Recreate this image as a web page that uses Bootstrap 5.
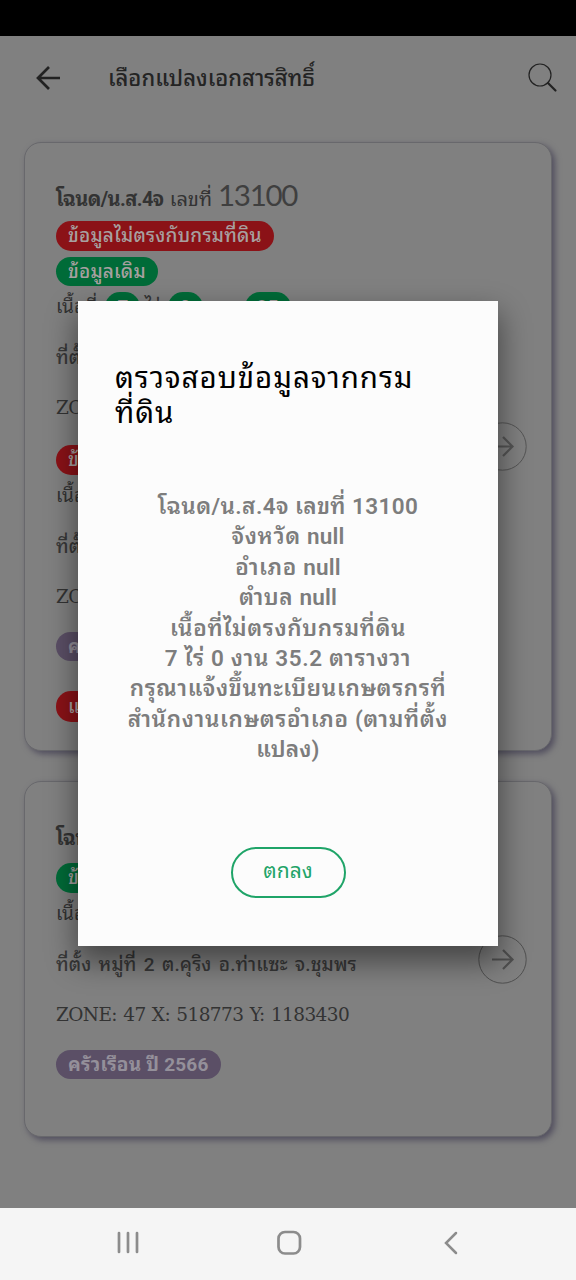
<!DOCTYPE html>
<html lang="th">
<head>
<meta charset="utf-8">
<meta name="viewport" content="width=device-width, initial-scale=1">
<title>เลือกแปลงเอกสารสิทธิ์</title>
<link href="https://cdn.jsdelivr.net/npm/bootstrap@5.3.0/dist/css/bootstrap.min.css" rel="stylesheet">
<style>
body{background:#808080;font-family:Roboto,"Noto Sans Thai Looped","Noto Looped Thai",Loma,Garuda,Waree,Umpush,"Noto Sans Thai",sans-serif;color:#3b3b3b}
.screen{width:576px;height:1280px}
.statusbar{height:36px;background:#000}
.appbar{height:84px;padding:0 18px 0 34px;color:#222}
.apptitle{font-size:22px;font-weight:500;margin-left:46px;padding-top:1px;line-height:40px;color:#242424;letter-spacing:0}
.plot{margin:0 24px;padding:37px 31px 0;border:1px solid #68686c;border-radius:17px;background:#808080;box-shadow:3px 3px 6px #514e5e;color:#333}
.plot-a{height:609px;margin-top:22px}
.plot-b{height:356px;margin-top:30px}
.line-title{height:36px;font-size:20px;padding-top:1px}
.line-title b{letter-spacing:-.6px}
.line-s{height:40px;font-size:19px;padding-top:2px}
.line-m{height:62px;font-size:19px;font-weight:500;letter-spacing:.1px;word-spacing:2.5px;padding-top:2px;color:#383838}
.deed{font-family:Lato,sans-serif;font-size:29.5px;letter-spacing:-1.3px;color:#3f3f3f;margin:0 0 6px 6px}
.zone{height:40px;font-family:"DejaVu Serif",serif;font-size:18.5px;letter-spacing:-.6px;word-spacing:1px}
.tag{display:flex;width:max-content;align-items:center;height:30px;padding:1px 12px 0;border-radius:15px;font-size:19px;font-weight:500;letter-spacing:.2px;color:#a7a0a0;white-space:nowrap}
.tag-red{background:#8b1217}.tag-green{background:#006b38}.tag-plum{background:#5b4f66;color:#94909a;font-weight:700}
.go{right:24px;width:49px;height:49px}
.dialog-box{left:78px;top:301px;width:420px;height:644.5px;background:#fcfcfc;box-shadow:0 14px 28px 2px rgba(0,0,0,.46);padding:60px 36px 0}
.dialog-box h1{font-size:29.5px;line-height:35px;font-weight:400;color:#000;margin:0 0 0 1px;white-space:nowrap;letter-spacing:.95px}
.msg{margin-top:60px;font-size:22.5px;line-height:30.4px;font-weight:600;color:#7d7d7d;text-align:center;letter-spacing:.65px}
.msg .latin{letter-spacing:.15px}
.msg .num{letter-spacing:.4px}
.msg div{white-space:nowrap}
.btn-ok{width:115px;height:51px;border:2.5px solid #1fa468;border-radius:26px;color:#1fa468;font-size:21px;padding:0}
.navkeys{height:72px;background:#f5f5f5}
</style>
</head>
<body>
<div class="screen position-relative overflow-hidden d-flex flex-column">
  <div class="statusbar flex-shrink-0"></div>
  <header class="appbar d-flex align-items-center flex-shrink-0">
    <svg width="28" height="28" fill="none" stroke="currentColor" stroke-width="2.7"><path d="M26 14H4M15 3 4 14l11 11"/></svg>
    <div class="apptitle"><span>เลือกแปลงเอกสารสิทธิ์</span></div>
    <svg class="ms-auto" width="32" height="32" fill="none" stroke="currentColor"><circle cx="14" cy="13" r="11" stroke-width="1.2"/><path d="m22 21 7.500 7.500" stroke-width="2.2" stroke-linecap="round"/></svg>
  </header>

  <section class="plot plot-a flex-shrink-0 position-relative">
    <div class="line-title d-flex align-items-center"><b>โฉนด/น.ส.4จ</b><span style="margin-left:6px">เลขที่</span><span class="deed">13100</span></div>
    <div class="tag tag-red" style="margin-top:5px">ข้อมูลไม่ตรงกับกรมที่ดิน</div>
    <div class="tag tag-green" style="margin-top:6px;height:29px">ข้อมูลเดิม</div>
    <div class="line-s d-flex align-items-center gap-1"><span class="me-1">เนื้อที่</span><span class="tag tag-green">7</span><span>ไร่</span><span class="tag tag-green ms-1">0</span><span class="ms-1">งาน</span><span class="tag tag-green">35</span></div>
    <div class="line-m d-flex align-items-center">ที่ตั้ง</div>
    <div class="zone d-flex align-items-center">ZONE:</div>
    <div class="tag tag-red" style="margin-top:17px">ข้อมูล</div>
    <div class="line-s d-flex align-items-center">เนื้อที่</div>
    <div class="line-m d-flex align-items-center">ที่ตั้ง</div>
    <div class="zone d-flex align-items-center">ZONE:</div>
    <div class="tag tag-plum" style="margin-top:15px;height:29px">ครัวเรือน</div>
    <div class="tag tag-red" style="margin-top:30px;height:31px">แปลง</div>
    <svg class="go position-absolute" style="top:279px" fill="none" stroke="#555"><circle cx="24.5" cy="24.5" r="23.7"/><path d="M14 24.5h20M25 15l9.5 9.5L25 34" stroke-width="2.2"/></svg>
  </section>

  <section class="plot plot-b flex-shrink-0 position-relative">
    <div class="line-title d-flex align-items-center"><b>โฉนด/น.ส.4จ</b></div>
    <div class="tag tag-green" style="margin-top:8px">ข้อมูล</div>
    <div class="line-s d-flex align-items-center">เนื้อที่</div>
    <div class="line-m d-flex align-items-center"><span>ที่ตั้ง หมู่ที่ 2 ต.คุริง อ.ท่าแซะ จ.ชุมพร</span></div>
    <div class="zone d-flex align-items-center"><span>ZONE: 47 X: 518773 Y: 1183430</span></div>
    <div class="tag tag-plum" style="margin-top:15px;height:29px">ครัวเรือน ปี 2566</div>
    <svg class="go position-absolute" style="top:153px" fill="none" stroke="#505050"><circle cx="24.5" cy="24.5" r="23.7"/><path d="M14 24.5h20M25 15l9.5 9.5L25 34" stroke-width="2.2"/></svg>
  </section>

  <nav class="navkeys mt-auto flex-shrink-0 d-flex justify-content-between align-items-center">
    <svg width="28" height="28" style="margin:0 0 2px 115px" fill="none" stroke="#8c8c8c" stroke-width="2.7" stroke-linecap="round"><path d="M4 4v19M13 4v19M22 4v19"/></svg>
    <svg width="28" height="28" class="mb-1" fill="none" stroke="#8c8c8c" stroke-width="2.7"><rect x="2.500" y="4" width="21.500" height="21.500" rx="6.500"/></svg>
    <svg width="28" height="28" style="margin:0 111px 0 0" fill="none" stroke="#8c8c8c" stroke-width="2.5" stroke-linecap="round"><path d="M19 3 9 13l10 10"/></svg>
  </nav>

  <div class="dialog-box position-absolute" role="dialog">
    <h1><span>ตรวจสอบข้อมูลจากกรม</span><br><span>ที่ดิน</span></h1>
    <div class="msg">
      <div class="num">โฉนด/น.ส.4จ เลขที่ 13100</div>
      <div>จังหวัด <span class="latin">null</span></div>
      <div>อำเภอ <span class="latin">null</span></div>
      <div>ตำบล <span class="latin">null</span></div>
      <div>เนื้อที่ไม่ตรงกับกรมที่ดิน</div>
      <div>7 ไร่ 0 งาน 35.2 ตารางวา</div>
      <div>กรุณาแจ้งขึ้นทะเบียนเกษตรกรที่</div>
      <div>สำนักงานเกษตรอำเภอ (ตามที่ตั้ง</div>
      <div class="latin">แปลง)</div>
    </div>
    <div class="d-flex justify-content-center" style="margin-top:82px"><button class="btn btn-ok" type="button">ตกลง</button></div>
  </div>
</div>
<script src="https://cdn.jsdelivr.net/npm/bootstrap@5.3.0/dist/js/bootstrap.bundle.min.js"></script>
</body>
</html>
